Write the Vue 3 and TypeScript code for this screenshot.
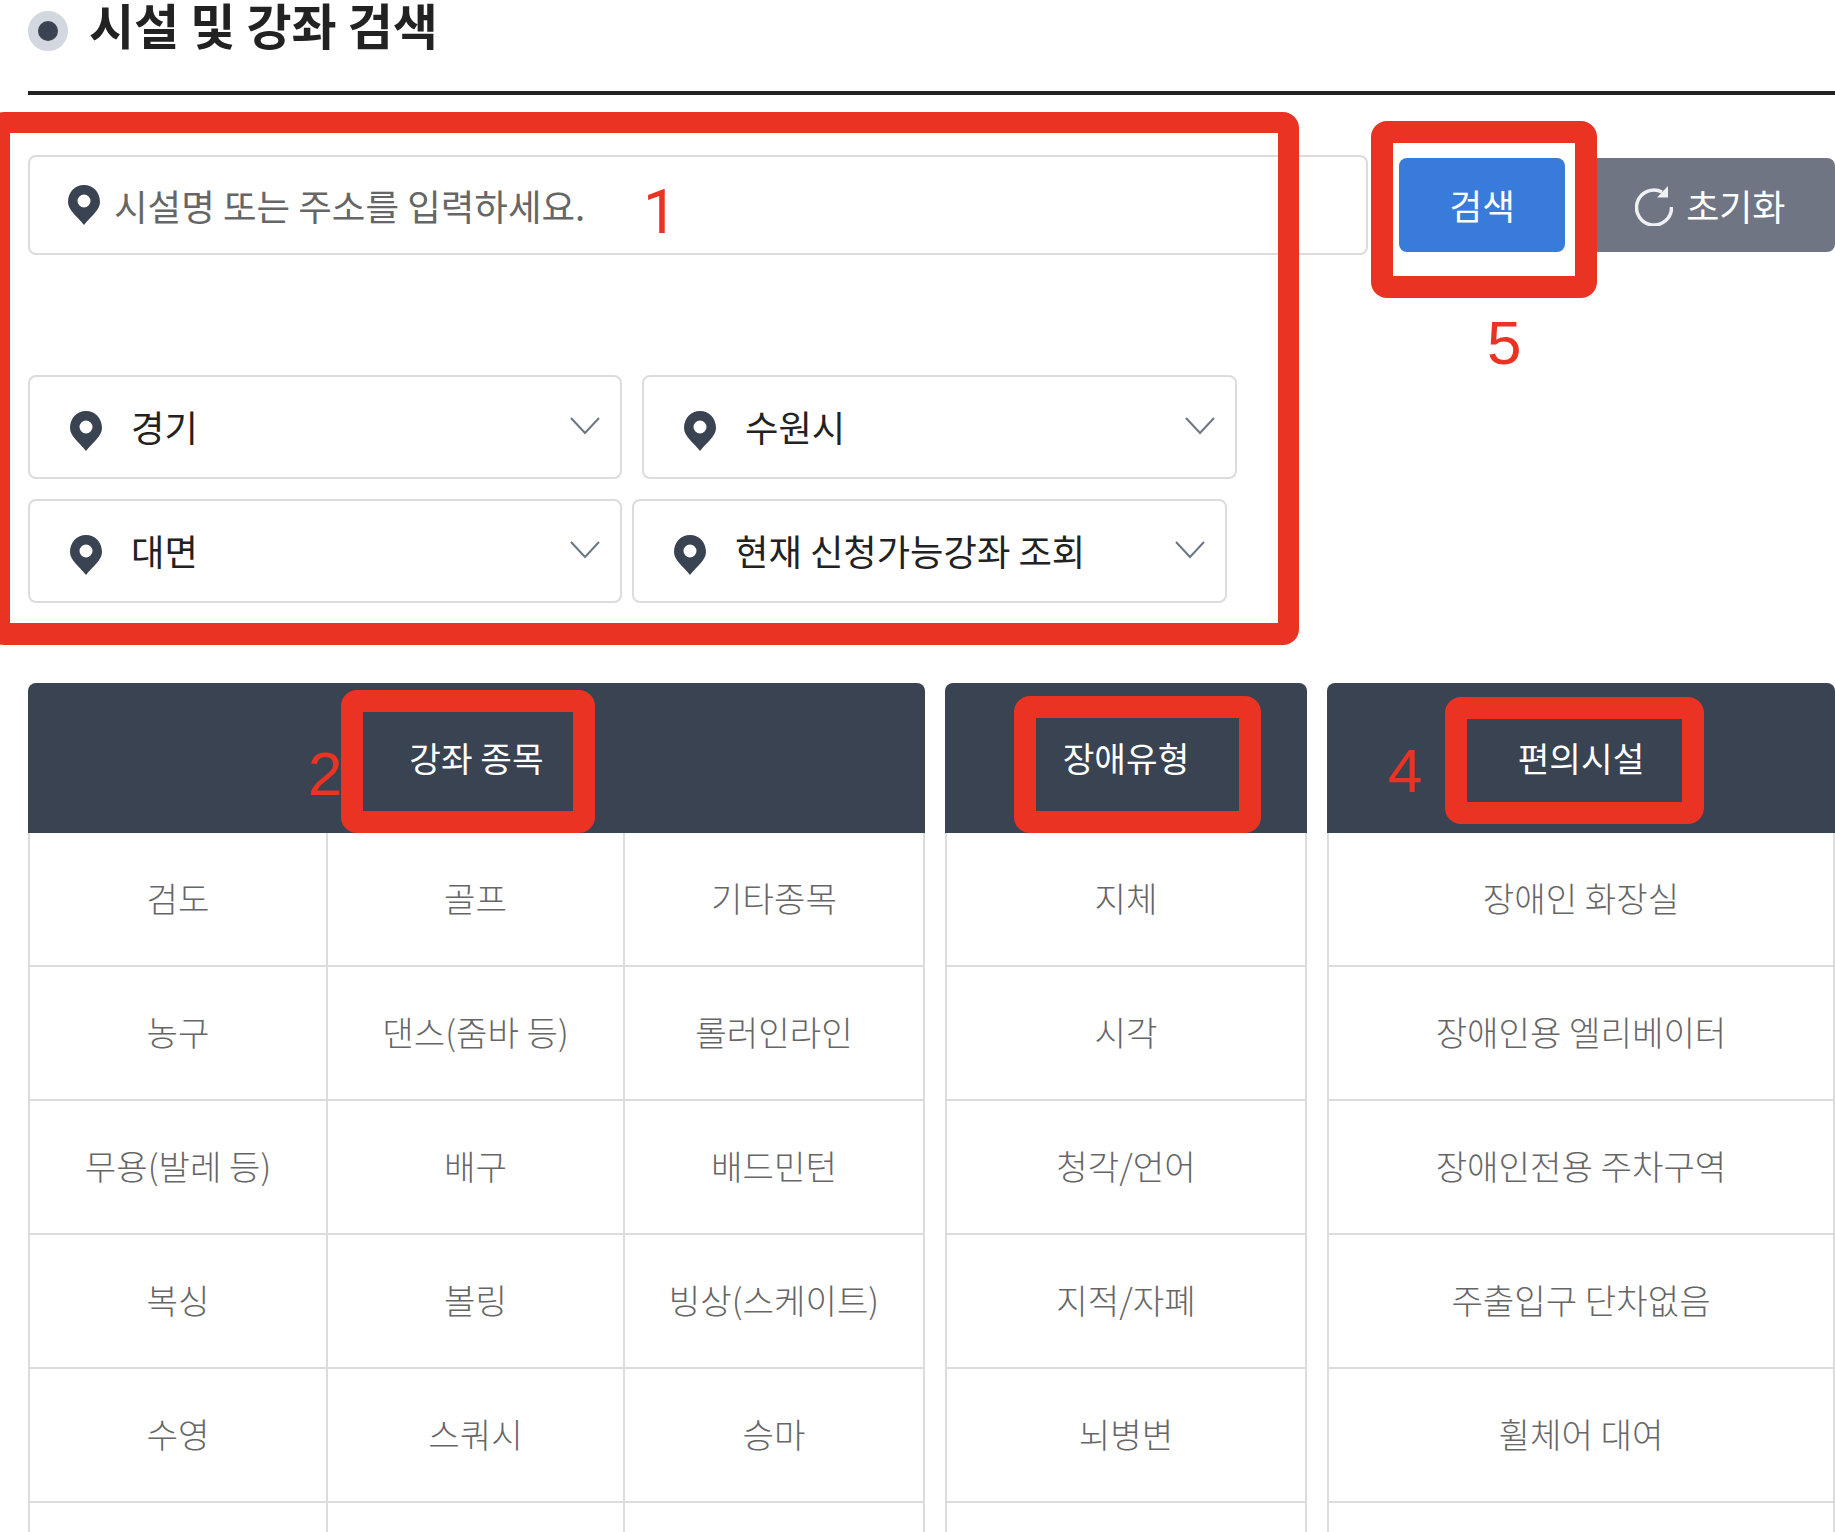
<script setup lang="ts">
interface Column {
  title: string
  kind: string
  columns: number
  items: string[]
}

const pinPath =
  'M16 0C7 0 0 7 0 17c0 8 9 14 16 23 7-9 16-15 16-23C32 7 25 0 16 0zm0 9.5a6.5 6.5 0 1 1 0 13 6.5 6.5 0 0 1 0-13z'

const columns: Column[] = [
  {
    title: '강좌 종목',
    kind: 'sports',
    columns: 3,
    items: ['검도', '골프', '기타종목', '농구', '댄스(줌바 등)', '롤러인라인', '무용(발레 등)', '배구', '배드민턴', '복싱', '볼링', '빙상(스케이트)', '수영', '스쿼시', '승마', '', '', ''],
  },
  {
    title: '장애유형',
    kind: 'types',
    columns: 1,
    items: ['지체', '시각', '청각/언어', '지적/자폐', '뇌병변', ''],
  },
  {
    title: '편의시설',
    kind: 'amenities',
    columns: 1,
    items: ['장애인 화장실', '장애인용 엘리베이터', '장애인전용 주차구역', '주출입구 단차없음', '휠체어 대여', ''],
  },
]
</script>

<template>
  <div class="page">
    <header class="heading">
      <span class="bullet"></span>
      <h1>시설 및 강좌 검색</h1>
    </header>

    <div class="search-row">
      <div class="search-input">
        <svg class="pin" viewBox="0 0 32 40"><path fill-rule="evenodd" :d="pinPath" /></svg>
        <span>시설명 또는 주소를 입력하세요.</span>
      </div>
      <button class="btn btn-search">검색</button>
      <button class="btn btn-reset">
        <svg class="reload" viewBox="0 0 38 40">
          <path d="M36.5 21A17.5 17.5 0 1 1 27 6" fill="none" stroke="currentColor" stroke-width="3.5" />
          <path d="M33 0v11.5H22z" fill="currentColor" />
        </svg>
        <span>초기화</span>
      </button>
    </div>

    <div class="filters first">
      <div class="select wide">
        <svg class="pin" viewBox="0 0 32 40"><path fill-rule="evenodd" :d="pinPath" /></svg>
        <span class="select-label">경기</span>
        <svg class="chevron" viewBox="0 0 30 18"><polyline points="1,1 15,16 29,1" /></svg>
      </div>
      <div class="select city">
        <svg class="pin" viewBox="0 0 32 40"><path fill-rule="evenodd" :d="pinPath" /></svg>
        <span class="select-label">수원시</span>
        <svg class="chevron" viewBox="0 0 30 18"><polyline points="1,1 15,16 29,1" /></svg>
      </div>
    </div>
    <div class="filters second">
      <div class="select wide">
        <svg class="pin" viewBox="0 0 32 40"><path fill-rule="evenodd" :d="pinPath" /></svg>
        <span class="select-label">대면</span>
        <svg class="chevron" viewBox="0 0 30 18"><polyline points="1,1 15,16 29,1" /></svg>
      </div>
      <div class="select city">
        <svg class="pin" viewBox="0 0 32 40"><path fill-rule="evenodd" :d="pinPath" /></svg>
        <span class="select-label">현재 신청가능강좌 조회</span>
        <svg class="chevron" viewBox="0 0 30 18"><polyline points="1,1 15,16 29,1" /></svg>
      </div>
    </div>

    <div class="tables">
      <section v-for="col in columns" :key="col.kind" class="table" :class="col.kind">
        <h2 class="table-head">{{ col.title }}</h2>
        <div class="table-body" :class="{ triple: col.columns === 3 }">
          <div v-for="(item, i) in col.items" :key="i" class="cell">{{ item }}</div>
        </div>
      </section>
    </div>

    <div class="mark mark-a"></div>
    <div class="mark mark-b"></div>
    <div class="mark mark-c"></div>
    <div class="mark mark-d"></div>
    <div class="mark mark-e"></div>
    <span class="num num-1">1</span>
    <span class="num num-2">2</span>
    <span class="num num-4">4</span>
    <span class="num num-5">5</span>
  </div>
</template>

<style scoped>
.page {
  position: relative;
  width: 1835px;
  height: 1532px;
  overflow: hidden;
  box-sizing: border-box;
  padding-left: 28px;
  background: #fff;
  font-family: "Noto Sans CJK KR", "Noto Sans", sans-serif;
  color: #222;
}
.heading {
  display: flex;
  align-items: flex-start;
  gap: 21px;
  height: 91px;
  border-bottom: 4px solid #222;
}
.bullet {
  flex: none;
  box-sizing: border-box;
  width: 40px;
  height: 40px;
  margin-top: 11px;
  border: 10px solid #d3d7df;
  border-radius: 50%;
  background: #3a4352;
  filter: blur(0.6px);
}
h1 {
  margin: 0;
  font-size: 49px;
  line-height: 48px;
  font-weight: 700;
  color: #222;
}
.search-row {
  display: flex;
  margin-top: 60px;
  height: 100px;
}
.search-input {
  box-sizing: border-box;
  display: flex;
  align-items: center;
  gap: 14px;
  width: 1341px;
  height: 100px;
  padding-left: 38px;
  border: 2px solid #dcdcdc;
  border-radius: 8px;
  font-size: 36.5px;
  color: #666;
}
.pin {
  flex: none;
  width: 32px;
  height: 40px;
  fill: #3a4352;
}
.btn {
  box-sizing: border-box;
  height: 94px;
  margin-top: 3px;
  border: 0;
  border-radius: 8px;
  color: #fff;
  font-family: inherit;
  line-height: 1;
}
.btn-search {
  width: 166px;
  margin-left: 31px;
  font-size: 35.5px;
  background: #387bdb;
}
.btn-reset {
  display: flex;
  align-items: center;
  gap: 13px;
  width: 257px;
  margin-left: 13px;
  padding-left: 57px;
  font-size: 36px;
  background: #6f7583;
}
.reload {
  flex: none;
  width: 38px;
  height: 40px;
  margin-top: 2px;
  color: #eef0f2;
}
.filters {
  display: flex;
}
.filters.first {
  margin-top: 120px;
}
.filters.second {
  margin-top: 20px;
}
.select {
  box-sizing: border-box;
  display: flex;
  align-items: center;
  height: 104px;
  padding: 0 20px 0 40px;
  border: 2px solid #dcdcdc;
  border-radius: 8px;
  font-size: 36.3px;
  color: #222;
}
.select-label {
  padding-bottom: 2px;
}
.select .pin {
  margin-top: 8px;
  margin-right: 29px;
}
.select.wide {
  width: 594px;
}
.first .city {
  width: 595px;
  margin-left: 20px;
}
.second .city {
  width: 595px;
  margin-left: 10px;
}
.chevron {
  width: 30px;
  height: 18px;
  margin-left: auto;
  margin-top: -2px;
  fill: none;
  stroke: #6b7785;
  stroke-width: 2;
}
.tables {
  display: flex;
  gap: 20px;
  margin-top: 80px;
}
.table {
  flex: none;
}
.sports {
  width: 897px;
}
.types {
  width: 362px;
}
.amenities {
  width: 508px;
}
.table-head {
  display: flex;
  align-items: center;
  justify-content: center;
  box-sizing: border-box;
  height: 150px;
  margin: 0;
  padding-bottom: 2px;
  border-radius: 8px 8px 0 0;
  background: #3a4352;
  color: #fff;
  font-size: 34.4px;
  font-weight: 400;
  line-height: 1;
}
.table-body {
  display: grid;
  grid-template-columns: 1fr;
  grid-auto-rows: 134px;
  border-right: 2px solid #dcdcdc;
}
.table-body.triple {
  grid-template-columns: 298px 297px 300px;
}
.cell {
  box-sizing: border-box;
  display: flex;
  align-items: center;
  justify-content: center;
  padding-bottom: 4px;
  border-left: 2px solid #dcdcdc;
  border-bottom: 2px solid #dcdcdc;
  font-size: 34.2px;
  font-weight: 300;
  color: #666;
}
.mark {
  position: absolute;
  box-sizing: border-box;
  border: 22px solid #eb3323;
  border-radius: 16px;
}
.mark-a {
  left: -12px;
  top: 112px;
  width: 1311px;
  height: 533px;
  border-width: 21px 21px 22px 22px;
}
.mark-b {
  left: 1371px;
  top: 121px;
  width: 226px;
  height: 177px;
}
.mark-c {
  left: 341px;
  top: 690px;
  width: 254px;
  height: 143px;
}
.mark-d {
  left: 1014px;
  top: 696px;
  width: 247px;
  height: 137px;
}
.mark-e {
  left: 1445px;
  top: 697px;
  width: 259px;
  height: 127px;
}
.num {
  position: absolute;
  font-family: "Liberation Sans", Arial, sans-serif;
  font-size: 62px;
  line-height: 62px;
  color: #eb3323;
}
.num-1 {
  left: 643px;
  top: 181px;
  font-family: Roboto, sans-serif;
  font-size: 61px;
}
.num-2 {
  left: 308px;
  top: 743px;
}
.num-4 {
  left: 1388px;
  top: 740px;
}
.num-5 {
  left: 1487px;
  top: 312px;
}
</style>

<style>
html,
body {
  margin: 0;
  overflow: hidden;
  background: #fff;
}
</style>
